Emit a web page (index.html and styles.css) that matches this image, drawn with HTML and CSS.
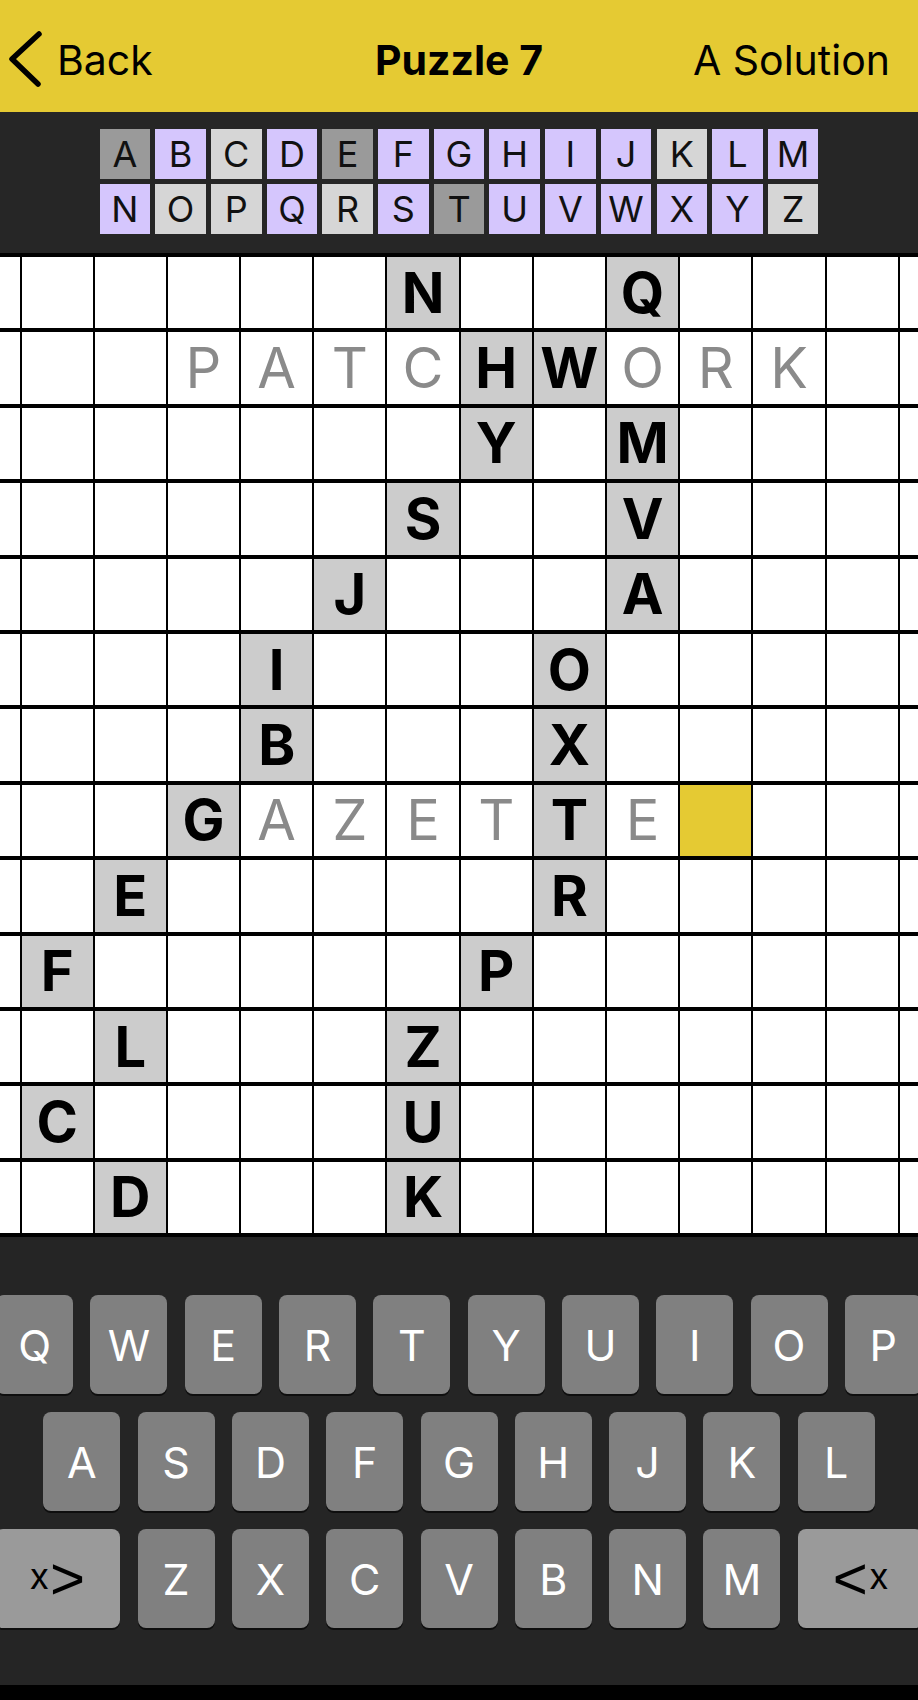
FILE: index.html
```html
<!DOCTYPE html>
<html lang="en">
<head>
    <meta charset="UTF-8">
    <meta name="viewport" content="width=device-width, initial-scale=1.0">
    <title>Puzzle 7</title>
    <link rel="stylesheet" href="styles.css">
</head>
<body>
<div class="page">

    <header class="navbar">
        <div class="back">
            <svg class="chevron" width="40" height="60" viewBox="0 0 40 60">
                <path d="M33 6 L6 31 L32 56" fill="none" stroke="#000" stroke-width="5.5" stroke-linecap="round" stroke-linejoin="round"/>
            </svg>
            <span>Back</span>
        </div>
        <div class="title">Puzzle 7</div>
        <div class="solution">A Solution</div>
    </header>

    <section class="alphabet">
        <div class="tiles">
            <div class="tile used">A</div>
            <div class="tile open">B</div>
            <div class="tile free">C</div>
            <div class="tile open">D</div>
            <div class="tile used">E</div>
            <div class="tile open">F</div>
            <div class="tile open">G</div>
            <div class="tile open">H</div>
            <div class="tile open">I</div>
            <div class="tile open">J</div>
            <div class="tile free">K</div>
            <div class="tile open">L</div>
            <div class="tile open">M</div>
        </div>
        <div class="tiles">
            <div class="tile open">N</div>
            <div class="tile free">O</div>
            <div class="tile free">P</div>
            <div class="tile open">Q</div>
            <div class="tile free">R</div>
            <div class="tile open">S</div>
            <div class="tile used">T</div>
            <div class="tile open">U</div>
            <div class="tile open">V</div>
            <div class="tile open">W</div>
            <div class="tile open">X</div>
            <div class="tile open">Y</div>
            <div class="tile free">Z</div>
        </div>
    </section>

    <main class="board" id="board">
        <!-- cells are filled in by the script below -->
    </main>

    <section class="keyboard">
        <div class="key-row">
            <div class="key">Q</div>
            <div class="key">W</div>
            <div class="key">E</div>
            <div class="key">R</div>
            <div class="key">T</div>
            <div class="key">Y</div>
            <div class="key">U</div>
            <div class="key">I</div>
            <div class="key">O</div>
            <div class="key">P</div>
        </div>
        <div class="key-row">
            <div class="key">A</div>
            <div class="key">S</div>
            <div class="key">D</div>
            <div class="key">F</div>
            <div class="key">G</div>
            <div class="key">H</div>
            <div class="key">J</div>
            <div class="key">K</div>
            <div class="key">L</div>
        </div>
        <div class="key-row">
            <div class="key wide"><span class="label"><span class="small-x">x</span><span class="arrow">&gt;</span></span></div>
            <div class="key">Z</div>
            <div class="key">X</div>
            <div class="key">C</div>
            <div class="key">V</div>
            <div class="key">B</div>
            <div class="key">N</div>
            <div class="key">M</div>
            <div class="key wide"><span class="label"><span class="arrow">&lt;</span><span class="small-x">x</span></span></div>
        </div>
    </section>

    <div class="home-bar"></div>
</div>

<script>
    // . = empty, UPPER = given letter, lower = guessed letter, # = cursor
    const rows = [
        "......N..Q....",
        "...patcHWork..",
        ".......Y.M....",
        "......S..V....",
        ".....J...A....",
        "....I...O.....",
        "....B...X.....",
        "...GazetTe#...",
        "..E.....R.....",
        ".F.....P......",
        "..L...Z.......",
        ".C....U.......",
        "..D...K......."
    ];

    const board = document.getElementById('board');
    rows.forEach(row => {
        [...row].forEach(ch => {
            const cell = document.createElement('div');
            cell.className = 'cell';
            if (ch === '#') {
                cell.classList.add('cursor');
            } else if (ch !== '.') {
                cell.classList.add(ch === ch.toUpperCase() ? 'given' : 'guess');
                cell.textContent = ch.toUpperCase();
            }
            board.appendChild(cell);
        });
    });
</script>
</body>
</html>
```

FILE: styles.css
```css
body {
    margin: 0;
    background: #000;
    font-family: Inter, "Liberation Sans", sans-serif;
}

.page {
    width: 918px;
    height: 1700px;
    overflow: hidden;
    display: flex;
    flex-direction: column;
}

/* top bar */
.navbar {
    height: 112px;
    flex: none;
    box-sizing: border-box;
    padding-top: 8px;
    background: #e5ca33;
    display: grid;
    grid-template-columns: 1fr auto 1fr;
    align-items: center;
    font-size: 41px;
    color: #000;
}
.back {
    display: flex;
    align-items: center;
    gap: 11px;
    margin-left: 6px;
}
.chevron {
    display: block;
    margin-top: -4px;
}
.title {
    font-weight: 700;
}
.solution {
    justify-self: end;
    margin-right: 28px;
}

/* alphabet */
.alphabet {
    flex: none;
    background: #262626;
    padding: 17px 0 19px;
    display: flex;
    flex-direction: column;
    gap: 5px;
}
.tiles {
    display: grid;
    grid-template-columns: repeat(13, 50.5px);
    grid-auto-rows: 50px;
    gap: 5.2px;
    justify-content: center;
}
.tile {
    display: flex;
    align-items: center;
    justify-content: center;
    font-size: 36px;
    color: #111;
}
.tile.open {
    background: #d5c6fd;
}
.tile.free {
    background: #d6d6d6;
}
.tile.used {
    background: #9a9a9a;
}

/* puzzle grid */
.board {
    flex: none;
    background: #000;
    display: grid;
    grid-template-columns: 19.5px repeat(12, 71.2px) 1fr;
    grid-template-rows: repeat(13, 71.4px);
    column-gap: 2px;
    row-gap: 4px;
    padding: 4px 0;
}
.cell {
    background: #fff;
    display: flex;
    align-items: center;
    justify-content: center;
    font-size: 56px;
    line-height: 1;
    overflow: hidden;
}
.cell.given {
    background: #cccccc;
    font-weight: 700;
    color: #000;
}
.cell.guess {
    color: #8a8a8a;
}
.cell.cursor {
    background: #e5ca33;
}

/* keyboard */
.keyboard {
    flex: 1;
    background: #252525;
    padding-top: 58px;
    display: flex;
    flex-direction: column;
    gap: 18px;
}
.key-row {
    display: flex;
    justify-content: center;
    gap: 17.3px;
}
.key {
    flex: none;
    width: 77px;
    height: 99px;
    border-radius: 8px;
    background: #808080;
    box-shadow: 0 2px 0 #0e0e0e;
    color: #fff;
    font-size: 43px;
    display: flex;
    align-items: center;
    justify-content: center;
}
.key.wide {
    width: 125px;
    background: #9a9a9a;
    color: #000;
}
.label {
    line-height: 1;
    white-space: nowrap;
}
.small-x {
    font-size: 36px;
}
.arrow {
    font-family: "Liberation Sans", Arial, sans-serif;
    font-size: 60px;
    vertical-align: -10px;
    margin: 0 1px;
}

.home-bar {
    flex: none;
    height: 15px;
    background: #000;
}
```
